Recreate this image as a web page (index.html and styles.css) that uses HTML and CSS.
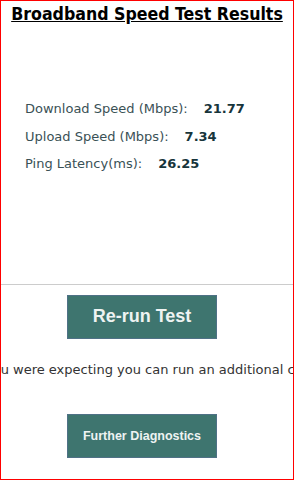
FILE: index.html
```html
<!DOCTYPE html>
<html>
<head>
<meta charset="utf-8">
<link rel="stylesheet" href="styles.css">
</head>
<body>
<div class="frame">
  <h1 class="title">Broadband Speed Test Results</h1>
  <div class="stats">
    <div class="row"><span class="label">Download Speed (Mbps):</span><span class="value">21.77</span></div>
    <div class="row"><span class="label">Upload Speed (Mbps):</span><span class="value">7.34</span></div>
    <div class="row"><span class="label">Ping Latency(ms):</span><span class="value">26.25</span></div>
  </div>
  <hr class="divider">
  <div class="actions">
    <button class="btn btn-main" type="button">Re-run Test</button>
  </div>
  <p class="message">If the speed is not what you were expecting you can run an additional check on your line below it.</p>
  <div class="actions actions-second">
    <button class="btn btn-small" type="button">Further Diagnostics</button>
  </div>
</div>
</body>
</html>
```

FILE: styles.css
```css
html, body {
  margin: 0;
  padding: 0;
  background: #fff;
}

.frame {
  box-sizing: border-box;
  width: 294px;
  height: 480px;
  border: 1px solid #ff0000;
  overflow: hidden;
  font-family: "DejaVu Sans", Verdana, sans-serif;
  color: #333;
}

.title {
  margin: 2px 0 0;
  font-family: "DejaVu Sans Condensed", "DejaVu Sans", sans-serif;
  font-size: 17.6px;
  font-weight: bold;
  line-height: 22px;
  text-align: center;
  text-decoration: underline;
  color: #000;
}

.stats {
  margin-top: 70px;
  padding-left: 24px;
}

.row {
  font-size: 13px;
  line-height: 27.5px;
  white-space: nowrap;
}

.label {
  color: #3a5156;
}

.value {
  margin-left: 16px;
  font-weight: bold;
  color: #17353b;
}

.divider {
  margin: 106px 0 0;
  border: 0;
  border-top: 1px solid #cccccc;
  height: 0;
}

.actions {
  display: flex;
  justify-content: center;
  margin-top: 10px;
  padding-right: 10px;
}

.actions-second {
  margin-top: 35px;
}

.btn {
  box-sizing: border-box;
  width: 150px;
  height: 44px;
  background: #3e756f;
  border: 1px solid #4f7186;
  color: #eef3f2;
  font-family: "Liberation Sans", Arial, sans-serif;
  font-weight: bold;
  padding: 0;
  cursor: pointer;
}

.btn-main {
  font-size: 18px;
}

.btn-small {
  font-size: 12.5px;
}

.message {
  margin: 22px -200px 0;
  font-size: 13px;
  line-height: 18px;
  text-align: center;
  white-space: nowrap;
  color: #333;
}
```
